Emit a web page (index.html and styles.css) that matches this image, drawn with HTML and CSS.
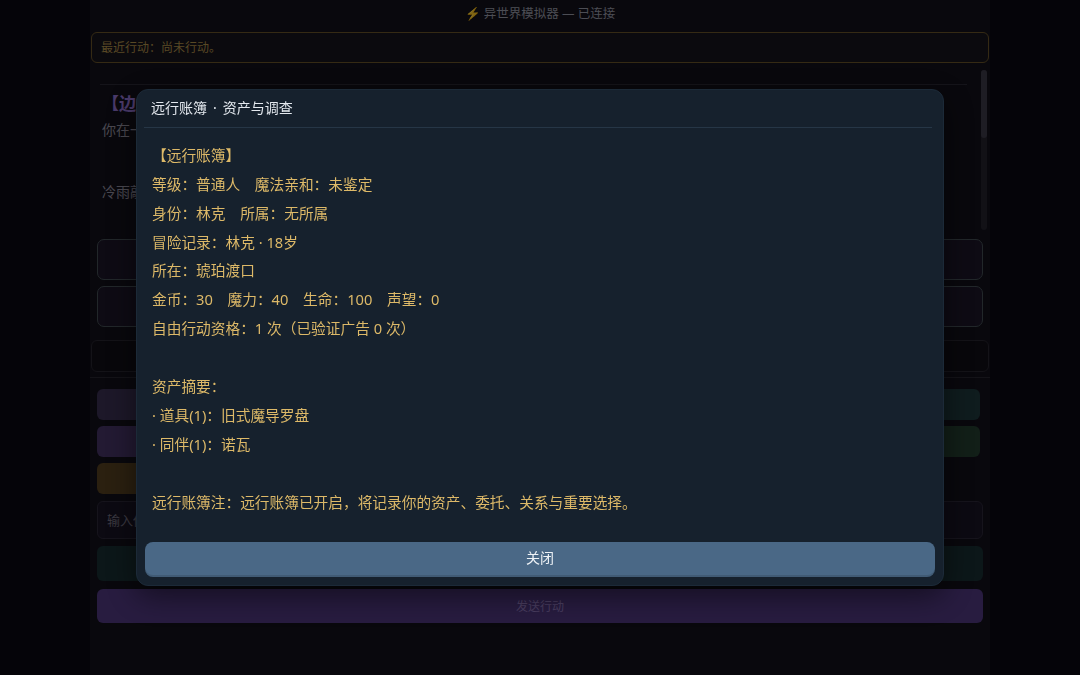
FILE: index.html
```html
<!DOCTYPE html>
<html lang="zh-CN">
<head>
    <meta charset="UTF-8">
    <meta name="viewport" content="width=device-width, initial-scale=1.0">
    <title>异世界模拟器</title>
    <link rel="stylesheet" href="styles.css">
</head>
<body>
    <div class="app">
        <div class="topbar"><span class="bolt">⚡</span> 异世界模拟器 — 已连接</div>
        <div class="recent">最近行动：尚未行动。</div>

        <div class="story">
            <div class="story-content">
                <div class="story-divider"></div>
                <h3 class="story-title">【边境渡口】</h3>
                <p>你在一阵刺骨的冷风中醒来。</p>
                <p class="gap">冷雨敲打着渡口的木栈桥。</p>
            </div>
            <div class="scrollbar"><div class="thumb"></div></div>
        </div>

        <div class="choices">
            <button class="choice"></button>
            <button class="choice"></button>
        </div>

        <div class="hint"></div>

        <div class="controls">
            <div class="quick-grid">
                <button class="quick purple"></button>
                <button class="quick teal"></button>
                <button class="quick violet"></button>
                <button class="quick green"></button>
                <button class="quick amber"></button>
            </div>
            <input class="action-input" type="text" placeholder="输入你的行动……">
            <button class="wide teal-dark"></button>
            <button class="wide send">发送行动</button>
        </div>
    </div>

    <div class="overlay">
        <div class="modal">
            <div class="modal-title">远行账簿<span class="sep">·</span>资产与调查</div>
            <div class="modal-body">【远行账簿】
等级：普通人　魔法亲和：未鉴定
身份：林克　所属：无所属
冒险记录：林克 · 18岁
所在：琥珀渡口
金币：30　魔力：40　生命：100　声望：0
自由行动资格：1 次（已验证广告 0 次）

资产摘要：
· 道具(1)：旧式魔导罗盘
· 同伴(1)：诺瓦

远行账簿注：远行账簿已开启，将记录你的资产、委托、关系与重要选择。</div>
            <button class="close-btn">关闭</button>
        </div>
    </div>
</body>
</html>
```

FILE: styles.css
```css
body {
    margin: 0;
    background-color: #0a0812;
    font-family: "Noto Sans", "Noto Sans CJK SC", sans-serif;
    color: #9490a0;
}
button, input {
    font-family: inherit;
}

/* main column (dimmed by the overlay) */
.app {
    width: 900px;
    margin: 0 auto;
    min-height: 100vh;
    background-color: #12101a;
}
.topbar {
    height: 28px;
    line-height: 28px;
    text-align: center;
    font-size: 12.5px;
    color: #989aa8;
}
.bolt {
    color: #d49a3c;
}
.recent {
    margin: 4px 1px 0;
    height: 31px;
    box-sizing: border-box;
    padding: 0 9px;
    line-height: 29px;
    font-size: 12px;
    color: #b0904a;
    background-color: #16141c;
    border: 1px solid #6a5428;
    border-radius: 6px;
}

.story {
    margin: 7px 3px 0 7px;
    height: 160px;
    display: flex;
    gap: 14px;
}
.story-content {
    flex: 1;
    padding-left: 5px;
    overflow: hidden;
}
.scrollbar {
    width: 6px;
    background: #24222c;
    border-radius: 3px;
}
.thumb {
    height: 68px;
    background: #3c3a48;
    border-radius: 3px;
}
.story-divider {
    height: 14px;
    margin-left: -2px;
    border-bottom: 1px solid #2a2834;
}
.story-title {
    margin: 8px 0 3px;
    font-size: 17px;
    line-height: 22px;
    color: #9474d4;
}
.story p {
    margin: 0;
    font-size: 14px;
    line-height: 24px;
}
.story p.gap {
    margin-top: 38px;
}

.choices {
    margin: 9px 7px 0;
    display: flex;
    flex-direction: column;
    gap: 6px;
}
.choice {
    height: 41px;
    background-color: #1c1628;
    border: 1px solid #444e54;
    border-radius: 7px;
}
.hint {
    margin: 13px 1px 0;
    height: 32px;
    background-color: #100e16;
    border: 1px solid #282630;
    border-radius: 6px;
    box-sizing: border-box;
}

.controls {
    margin-top: 5px;
    border-top: 1px solid #282630;
    padding: 11px 7px 20px;
    display: flex;
    flex-direction: column;
}
.quick-grid {
    display: grid;
    grid-template-columns: 1fr 1fr;
    gap: 6px;
    margin-right: 3px;
}
.quick {
    height: 31px;
    border: none;
    border-radius: 6px;
}
.purple { background-color: #3a3052; }
.teal { background-color: #1e383c; }
.violet { background-color: #463466; }
.green { background-color: #243e30; }
.amber { background-color: #564020; }

.action-input {
    margin-top: 7px;
    height: 38px;
    box-sizing: border-box;
    padding: 0 9px;
    background-color: #181424;
    border: 1px solid #2c2838;
    border-radius: 6px;
    font-size: 13px;
    color: #c8c4d4;
}
.action-input::placeholder {
    color: #747080;
}
.wide {
    border: none;
    border-radius: 6px;
    font-size: 12px;
}
.teal-dark {
    margin-top: 7px;
    height: 35px;
    background-color: #182e32;
}
.send {
    margin-top: 8px;
    height: 34px;
    background-color: #503880;
    color: #947cc0;
}

/* ledger dialog */
.overlay {
    position: fixed;
    inset: 0;
    background: rgba(0, 0, 0, 0.5);
    display: flex;
    align-items: center;
    justify-content: center;
}
.modal {
    width: 808px;
    box-sizing: border-box;
    padding: 8px;
    background-color: #16212d;
    border: 1px solid #1c2a38;
    border-radius: 12px;
    box-shadow: 0 10px 30px rgba(0, 0, 0, 0.5);
    display: flex;
    flex-direction: column;
}
.modal-title {
    padding: 1px 7px 10px;
    line-height: 18px;
    font-size: 14px;
    color: #e3e8ee;
    border-bottom: 1px solid #263646;
    margin: 0 3px 0 -1px;
}
.sep {
    margin: 0 6px;
}
.modal-body {
    padding: 12.5px 7px 25px;
    white-space: pre-wrap;
    font-size: 14.7px;
    line-height: 28.9px;
    color: #ddb968;
}
.close-btn {
    height: 35px;
    padding: 0 0 4px;
    border: none;
    border-radius: 8px;
    background-color: #4a6886;
    box-shadow: inset 0 -2px 0 rgba(0, 0, 0, 0.12);
    color: #eef2f6;
    font-size: 14px;
}
```
